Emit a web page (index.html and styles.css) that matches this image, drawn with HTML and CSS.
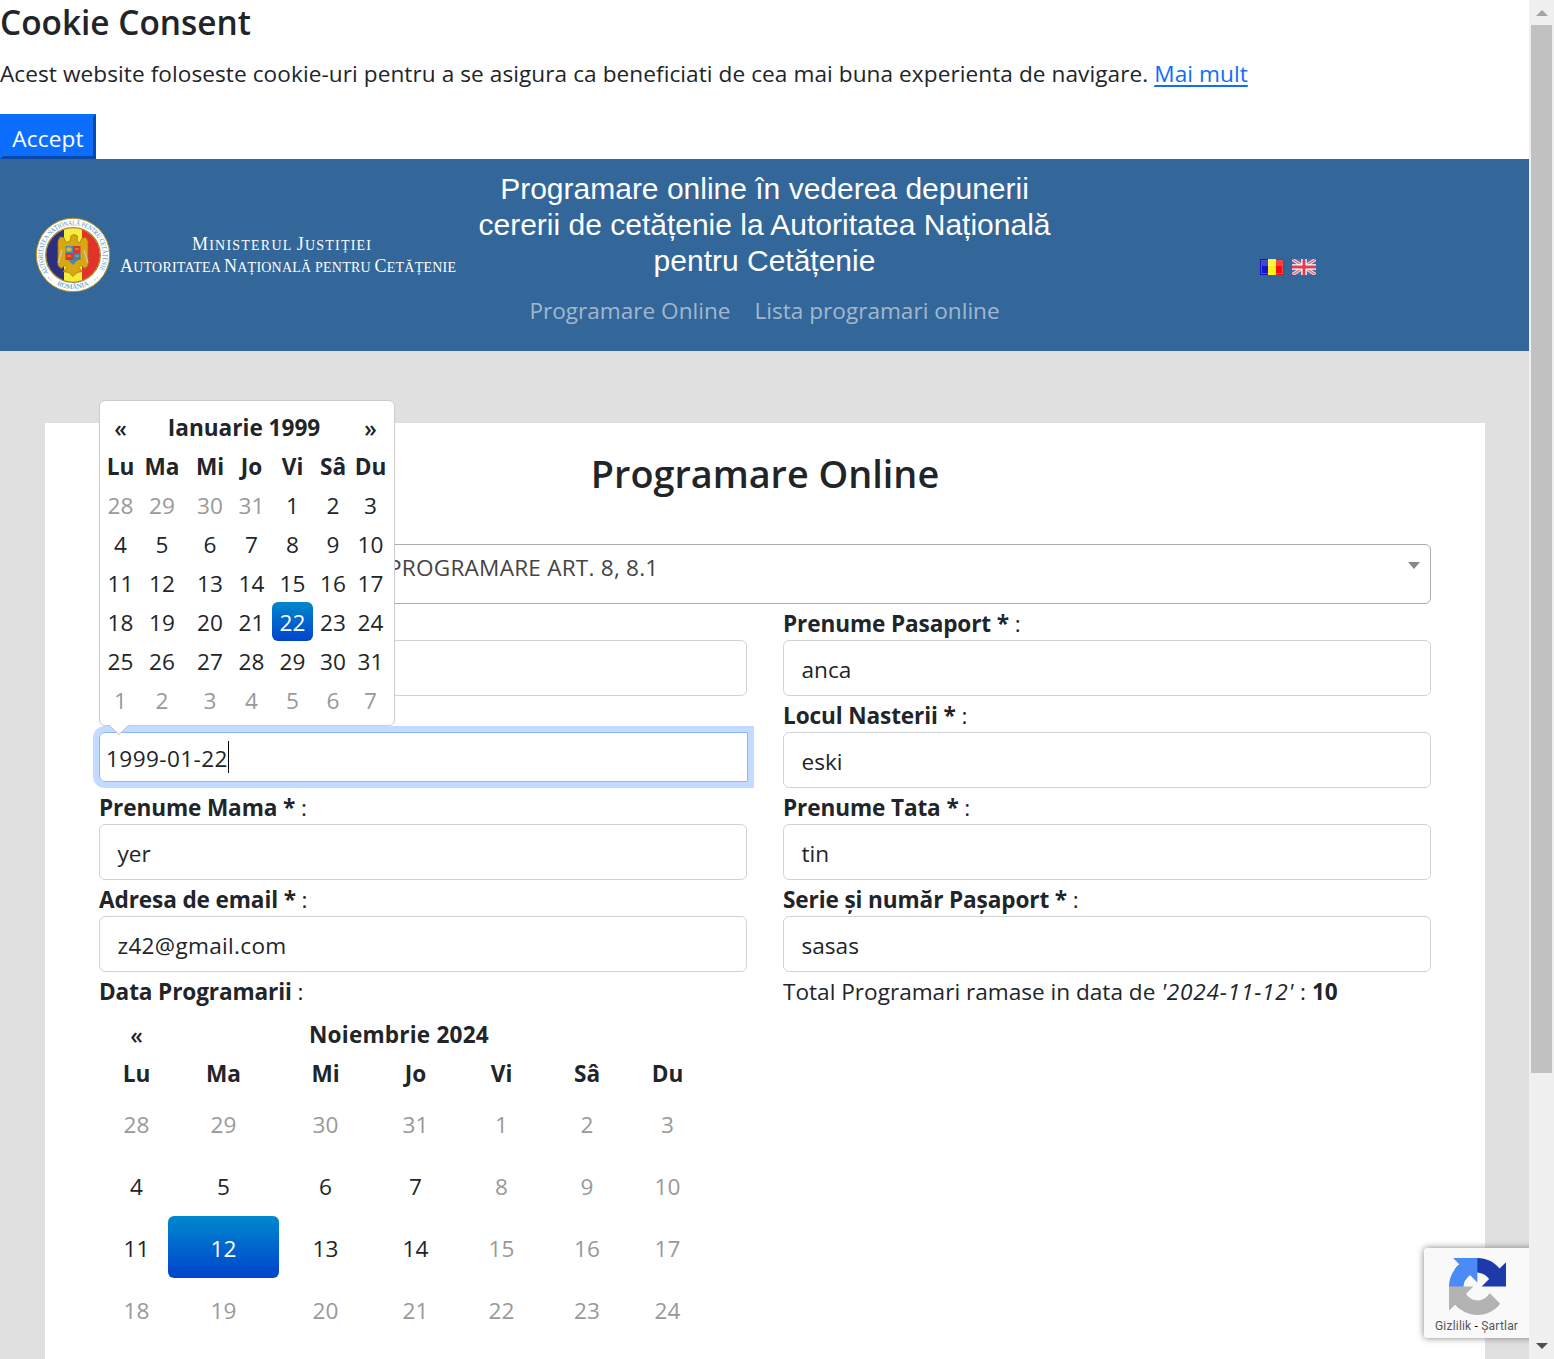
FILE: index.html
```html
<!DOCTYPE html>
<html lang="ro">
<head>
<meta charset="utf-8">
<title>Programare Online</title>
<link rel="stylesheet" href="styles.css">
</head>
<body>
<div class="page">
  <section class="cookie">
    <h4 class="cookie-title">Cookie Consent</h4>
    <p class="cookie-text">Acest website foloseste cookie-uri pentru a se asigura ca beneficiati de cea mai buna experienta de navigare. <a class="more" href="#">Mai mult</a></p>
    <button class="accept">Accept</button>
  </section>

  <header class="top">
    <div class="brand">
      <svg class="brand-svg" width="430" height="90" viewBox="0 0 430 90">
        <defs>
          <clipPath id="disc"><circle cx="38" cy="45" r="27"/></clipPath>
          <path id="arcTop" d="M13.500 62.500A30 30 0 1 1 62.500 62.500"/>
          <path id="arcBottom" d="M14 69A34 34 0 0 0 62 69"/>
        </defs>
        <circle cx="38" cy="45" r="36.700" fill="#fff" stroke="#b98f1c" stroke-width="1"/>
        <g clip-path="url(#disc)">
          <rect x="10" y="17" width="19" height="56" fill="#2b2f7d"/>
          <rect x="29" y="17" width="18" height="56" fill="#f3ee3c"/>
          <rect x="47" y="17" width="20" height="56" fill="#e23229"/>
        </g>
        <circle cx="38" cy="45" r="27.300" fill="none" stroke="#a9862c" stroke-width="1.300"/>
        <path d="M36 26l3-1.500 3.500 1.500-.5 5 3 2 2-5 4-.5 2 4v24l-3 3-4-3-2 2 3 4-5 1-4 4-4-4-6-1 4-4-2-2-4 3-3-3V31l2-4 4 .5 2 5 4-1.500z" fill="#d9a70f" stroke="#a5790c" stroke-width=".8"/>
        <path d="M30.500 36h7.500v7h-7.500z" fill="#3a8fc4"/><path d="M38 36h7.500v7H38z" fill="#d9372c"/>
        <path d="M30.500 43h7.500v7h-7.500z" fill="#d9372c"/><path d="M38 43h7.500v7H38z" fill="#3f7fb4"/>
        <path d="M33 50h10l-5 5z" fill="#4d8ba5"/>
        <path d="M32 38h4v3h-4zM40 39h4M40 46h4M32 46h4" fill="#e0b329" stroke="#e0b329"/>
        <path d="M27 40l-4 13M49 40l4 13" stroke="#c9cbd0" stroke-width="1.200"/>
        <text class="seal-text"><textPath href="#arcTop" textLength="127" lengthAdjust="spacingAndGlyphs">AUTORITATEA NAȚIONALĂ PENTRU CETĂȚENIE</textPath></text>
        <text class="seal-text"><textPath href="#arcBottom" startOffset="50%" text-anchor="middle">ROMÂNIA</textPath></text>
        <path d="M13 67l4 3.500M59 70.500l4-3.500" stroke="#7fa9bf" stroke-dasharray="1 1"/>
        <text class="brand-text" x="157" y="39.500" textLength="179" lengthAdjust="spacing"><tspan class="cap">M</tspan>INISTERUL <tspan class="cap">J</tspan>USTIȚIEI</text>
        <text class="brand-text" x="85" y="61.500" textLength="336" lengthAdjust="spacing"><tspan class="cap">A</tspan>UTORITATEA <tspan class="cap">N</tspan>AȚIONALĂ PENTRU <tspan class="cap">C</tspan>ETĂȚENIE</text>
      </svg>
    </div>
    <div class="heading">
      <div class="heading-text"><span>Programare online în vederea depunerii</span><span>cererii de cetățenie la Autoritatea Națională</span><span>pentru Cetățenie</span></div>
      <nav class="nav"><a>Programare Online</a><a>Lista programari online</a></nav>
    </div>
    <div class="flags">
      <svg width="24" height="16" viewBox="0 0 24 16"><path fill="#1414c8" d="M0 0h8v16H0z"/><path fill="#fbf01c" d="M8 0h8v16H8z"/><path fill="#f01010" d="M16 0h8v16h-8z"/><path d="M1.500 1.500h21v13h-21z" fill="none" stroke="#fff" stroke-opacity=".25"/><path d="M2 2h20v5H2z" fill="#fff" fill-opacity=".2"/></svg>
      <svg width="24" height="16" viewBox="0 0 24 16"><path fill="#5566ab" d="M0 0h24v16H0z"/><path d="M0 0l24 16M24 0L0 16" stroke="#f3e9ef" stroke-width="3.200"/><path d="M0 0l24 16M24 0L0 16" stroke="#e2606c" stroke-width="1.200"/><path d="M12 0v16M0 8h24" stroke="#fff" stroke-width="5.500"/><path d="M12 0v16M0 8h24" stroke="#e0404c" stroke-width="3"/></svg>
    </div>
  </header>

  <main class="card">
    <h2 class="title">Programare Online</h2>
    <div class="select"><span class="select-text">PROGRAMARE ART. 8, 8.1</span><span class="caret"></span></div>
    <div class="fields">
      <div class="field"><label class="label"></label><div class="input"></div></div>
      <div class="field"><label class="label"><b>Prenume Pasaport *</b> :</label><div class="input">anca</div></div>
      <div class="field">
        <label class="label"></label>
        <div class="input date"><span>1999-01-22</span><i class="cursor"></i>
          <div class="popup">
            <table class="cal small">
              <colgroup><col style="width:29px"><col style="width:54px"><col style="width:42px"><col style="width:41px"><col style="width:41px"><col style="width:40px"><col style="width:35px"></colgroup>
              <tr><th class="arrow">«</th><th colspan="5">Ianuarie 1999</th><th class="arrow">»</th></tr>
              <tr><th>Lu</th><th>Ma</th><th>Mi</th><th>Jo</th><th>Vi</th><th>Sâ</th><th>Du</th></tr>
              <tr><td class="off">28</td><td class="off">29</td><td class="off">30</td><td class="off">31</td><td>1</td><td>2</td><td>3</td></tr>
              <tr><td>4</td><td>5</td><td>6</td><td>7</td><td>8</td><td>9</td><td>10</td></tr>
              <tr><td>11</td><td>12</td><td>13</td><td>14</td><td>15</td><td>16</td><td>17</td></tr>
              <tr><td>18</td><td>19</td><td>20</td><td>21</td><td class="on">22</td><td>23</td><td>24</td></tr>
              <tr><td>25</td><td>26</td><td>27</td><td>28</td><td>29</td><td>30</td><td>31</td></tr>
              <tr><td class="off">1</td><td class="off">2</td><td class="off">3</td><td class="off">4</td><td class="off">5</td><td class="off">6</td><td class="off">7</td></tr>
            </table>
            <svg class="tip" width="20" height="10" viewBox="0 0 20 10"><path d="M0 0l10 9.500L20 0" fill="#fff" stroke="#bbb"/></svg>
          </div>
        </div>
      </div>
      <div class="field"><label class="label"><b>Locul Nasterii *</b> :</label><div class="input">eski</div></div>
      <div class="field"><label class="label"><b>Prenume Mama *</b> :</label><div class="input">yer</div></div>
      <div class="field"><label class="label"><b>Prenume Tata *</b> :</label><div class="input">tin</div></div>
      <div class="field"><label class="label"><b>Adresa de email *</b> :</label><div class="input email">z42@gmail.com</div></div>
      <div class="field"><label class="label"><b>Serie și număr Pașaport *</b> :</label><div class="input">sasas</div></div>
      <div>
        <label class="label"><b>Data Programarii</b> :</label>
        <table class="cal large">
          <colgroup><col style="width:63px"><col style="width:111px"><col style="width:93px"><col style="width:87px"><col style="width:85px"><col style="width:86px"><col style="width:75px"></colgroup>
          <tr><th class="arrow">«</th><th class="month" colspan="5">Noiembrie 2024</th><th></th></tr>
          <tr><th>Lu</th><th>Ma</th><th>Mi</th><th>Jo</th><th>Vi</th><th>Sâ</th><th>Du</th></tr>
          <tr><td class="off">28</td><td class="off">29</td><td class="off">30</td><td class="off">31</td><td class="off">1</td><td class="off">2</td><td class="off">3</td></tr>
          <tr><td>4</td><td>5</td><td>6</td><td>7</td><td class="off">8</td><td class="off">9</td><td class="off">10</td></tr>
          <tr><td>11</td><td class="on">12</td><td>13</td><td>14</td><td class="off">15</td><td class="off">16</td><td class="off">17</td></tr>
          <tr><td class="off">18</td><td class="off">19</td><td class="off">20</td><td class="off">21</td><td class="off">22</td><td class="off">23</td><td class="off">24</td></tr>
        </table>
      </div>
      <div class="label total">Total Programari ramase in data de <i>'2024-11-12'</i> : <b>10</b></div>
    </div>
  </main>

  <aside class="captcha">
    <svg width="57" height="57" viewBox="0 0 64 64"><path fill="#1c3aa9" d="M64 31.955l-.033-1.370V4.687l-7.160 7.160C50.948 4.674 42.033.093 32.050.093c-10.400 0-19.622 4.960-25.458 12.640l11.736 11.860a15.550 15.550 0 0 1 4.754-5.334c2.050-1.600 4.952-2.906 8.968-2.906.485 0 .86.057 1.135.163 4.976.393 9.288 3.140 11.828 7.124l-8.307 8.307L64 31.953"/><path fill="#4a8bf5" d="M31.862.094l-1.370.033H4.594l7.160 7.160C4.580 13.147 0 22.060 0 32.046c0 10.400 4.960 19.622 12.640 25.458L24.500 45.768a15.550 15.550 0 0 1-5.334-4.754c-1.600-2.050-2.906-4.952-2.906-8.968 0-.485.057-.86.163-1.135.393-4.976 3.140-9.288 7.124-11.828l8.307 8.307L31.860.095"/><path fill="#b3b3b3" d="M.001 32.045l.033 1.370v25.898l7.160-7.160c5.860 7.173 14.774 11.754 24.760 11.754 10.400 0 19.622-4.960 25.458-12.640l-11.736-11.860a15.550 15.550 0 0 1-4.754 5.334c-2.050 1.600-4.952 2.906-8.968 2.906-.485 0-.86-.057-1.135-.163-4.976-.393-9.288-3.140-11.828-7.124l8.307-8.307c-10.522.04-22.400.066-27.295-.005"/></svg>
    <div class="terms">Gizlilik <span>-</span> Şartlar</div>
  </aside>
</div>
<div class="scrollbar"><i class="up"></i><i class="thumb"></i><i class="down"></i></div>
</body>
</html>
```
FILE: styles.css
```css
* { box-sizing: border-box; }
body {
  margin: 0;
  display: flex;
  width: 1554px;
  height: 1359px;
  overflow: hidden;
  font-family: "Open Sans", sans-serif;
  font-size: 22.6px;
  line-height: 36px;
  color: #212529;
  background: #fff;
}
.page { position: relative; width: 1529px; height: 1359px; overflow: hidden; background: #e0e0e0; }

.cookie { height: 159px; background: #fff; }
.cookie-title { margin: 0; height: 56px; font-size: 33.4px; font-weight: 600; line-height: 44px; white-space: nowrap; }
.cookie-text { margin: 0; height: 58px; letter-spacing: .075px; white-space: nowrap; }
.more { color: #0d6efd; text-decoration: underline; text-underline-offset: 3px; text-decoration-thickness: 2px; }
.accept {
  display: block; width: 96px; height: 45px; padding: 4px 0 0;
  border: 3px outset #0d6efd; border-left-color: #0d6efd; border-top-color: #0d6efd;
  background: #0d6efd; color: #fff; font: inherit; line-height: 36px; letter-spacing: .2px;
}

.top { display: grid; grid-template-columns: 476px 577px 476px; height: 192px; background: #336699; }
.brand { padding: 51px 0 0 35px; }
.brand-svg { display: block; }
.brand-text { font-family: "Liberation Serif", serif; font-size: 14px; fill: #fff; }
.cap { font-size: 18px; }
.seal-text { font-family: "Liberation Serif", serif; font-size: 7px; fill: #3d8fbd; }
.heading { padding-top: 12px; text-align: center; color: #fff; }
.heading-text { display: flex; flex-direction: column; font: 30px/36px "Liberation Sans", Arial, sans-serif; white-space: nowrap; }
.nav { display: flex; justify-content: center; gap: 24px; padding-top: 14px; color: rgba(255, 255, 255, .55); white-space: nowrap; }
.flags { display: flex; gap: 8px; padding: 100px 0 0 207px; }

.card { width: 1440px; height: 936px; margin: 72px 0 0 45px; padding: 22px 54px 0; background: #fff; }
.title { margin: 0; height: 99px; font-size: 37.8px; font-weight: 600; line-height: 57px; text-align: center; }
.select { display: flex; justify-content: space-between; height: 60px; padding: 5px 10px 0 288px; border: 1px solid #aaa; border-radius: 6px; color: #444; letter-spacing: .22px; }
.caret { width: 0; height: 0; margin-top: 12px; border: 6px solid transparent; border-top: 7px solid #888; border-bottom: 0; }
.fields { display: grid; grid-template-columns: 648px 648px; column-gap: 36px; }
.field { height: 92px; }
.label { display: block; height: 36px; padding-top: 2px; letter-spacing: -.12px; white-space: nowrap; }
.input { display: flex; align-items: center; height: 56px; padding: 4px 17.5px 0; border: 1px solid #ced4da; border-radius: 6px; }
.email { letter-spacing: .3px; }
.date { position: relative; width: 649px; height: 50px; padding: 4px 6px 0; border-color: #86b7fe; border-radius: 6px 0 0 6px; box-shadow: 0 0 0 6px #c2dbfe; letter-spacing: .4px; }
.cursor { width: 1px; height: 32px; margin-top: -4px; background: #000; }

.popup { position: absolute; left: -1px; bottom: 55px; width: 296px; height: 326px; padding: 6px; border: 1px solid #ccc; border-radius: 6px; background: #fff; letter-spacing: 0; z-index: 2; }
.tip { position: absolute; left: 9px; bottom: -10px; }
.cal { border-collapse: collapse; table-layout: fixed; text-align: center; line-height: 36px; }
.cal th, .cal td { height: 39px; padding: 3px 0 0; white-space: nowrap; }
.cal th { font-weight: 700; }
.cal .arrow { font-weight: 600; padding-top: 5px; line-height: 34px; }
.cal .month { letter-spacing: .2px; }
.small { width: 282px; }
.large { width: 600px; margin: 6px 0 0 6px; }
.large td { height: 62px; }
.cal .off { color: #999; }
.cal .on { color: #fff; background: linear-gradient(#08c, #04c); border-radius: 6px; }
.total { width: 648px; letter-spacing: 0; }
.total i { letter-spacing: .8px; }

.captcha { position: absolute; left: 1424px; top: 1248px; width: 120px; height: 90px; padding: 10px 0 0 25px; border-radius: 3px; background: #f9f9f9; box-shadow: 0 0 7px #808080; }
.captcha svg { display: block; }
.terms { margin: 3px 0 0 -14px; font: 12px/16px Roboto, sans-serif; letter-spacing: .2px; color: #555; white-space: nowrap; }
.terms span { color: #000; }

.scrollbar { display: flex; flex-direction: column; align-items: center; width: 25px; height: 1359px; background: #f0f0f0; }
.up, .down { width: 0; height: 0; border: 6px solid transparent; }
.up { margin-top: 10px; border-top: 0; border-bottom: 6px solid #a3a3a3; }
.thumb { width: 21px; height: 1048px; margin-top: 9px; background: #c1c1c1; }
.down { margin-top: 270px; border-bottom: 0; border-top: 6px solid #505050; }
```
